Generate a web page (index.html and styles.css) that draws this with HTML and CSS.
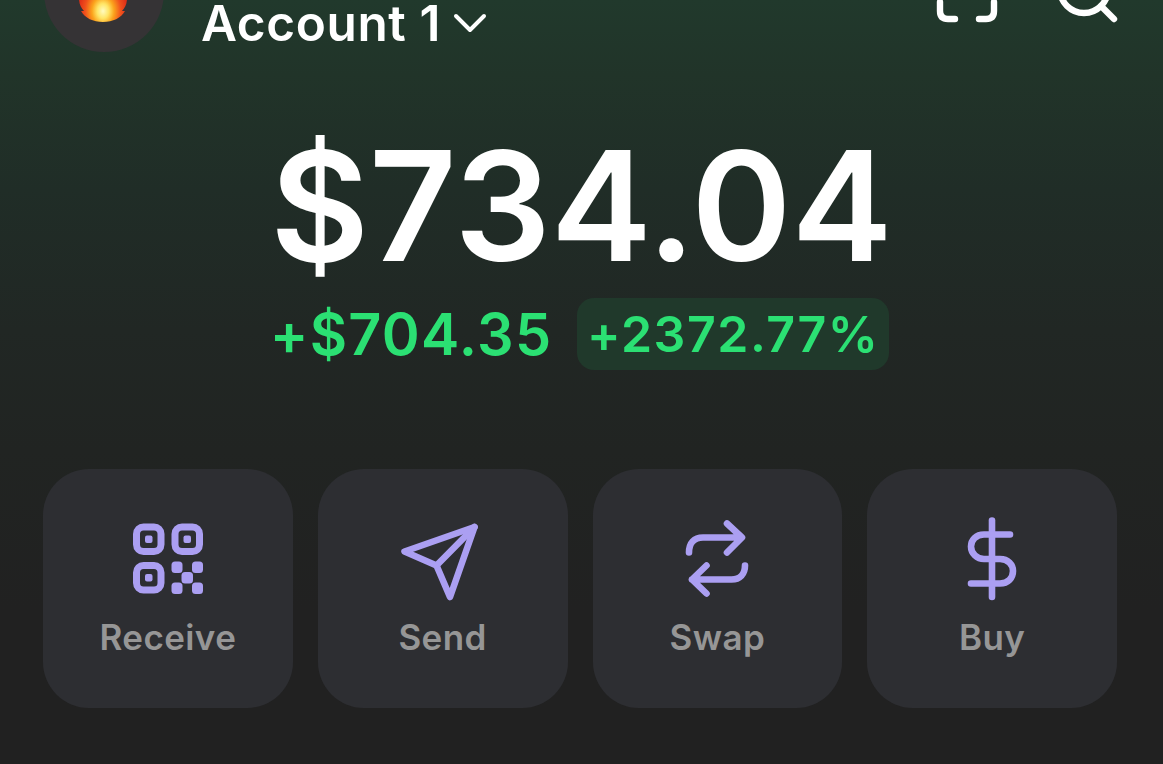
FILE: index.html
```
<!DOCTYPE html>
<html lang="en">
<head>
    <meta charset="UTF-8">
    <meta name="viewport" content="width=device-width, initial-scale=1.0">
    <title>Wallet - Account 1</title>
    <link rel="stylesheet" href="styles.css">
</head>
<body>
    <header class="header">
        <div class="avatar">
            <svg class="flame" viewBox="0 0 54 62">
                <defs>
                    <radialGradient id="fire" cx="50%" cy="82%" r="50%">
                        <stop offset="0" stop-color="#fffbc0"/>
                        <stop offset="0.24" stop-color="#ffe566"/>
                        <stop offset="0.46" stop-color="#fba31c"/>
                        <stop offset="0.75" stop-color="#f0501c"/>
                        <stop offset="1" stop-color="#df3017"/>
                    </radialGradient>
                </defs>
                <path fill="url(#fire)" d="M27 0C29 14 51 20 51 37C51 43 49 47 46 50L49 50C45 57 37 61 27 61C17 61 9 57 5 50L8 50C5 47 3 43 3 37C3 24 24 16 27 0Z"/>
            </svg>
        </div>
        <div class="account">
            <span class="account-name">Account 1</span>
            <svg class="chevron" viewBox="0 0 34 22"><path d="M3 4L17 18L31 4"/></svg>
        </div>
        <div class="tools">
            <svg class="tool" viewBox="0 0 64 64">
                <path d="M5 22V13Q5 5 13 5H22M42 5H51Q59 5 59 13V22M5 42V51Q5 59 13 59H20M44 59H51Q59 59 59 51V42"/>
            </svg>
            <svg class="tool" viewBox="0 0 64 64">
                <circle cx="29" cy="29" r="24"/>
                <path d="M46 46L59 59"/>
            </svg>
        </div>
    </header>

    <main>
        <section class="balance">
            <h1>$734.04</h1>
            <div class="change">
                <span class="amount">+$704.35</span>
                <span class="percent">+2372.77%</span>
            </div>
        </section>

        <nav class="actions">
            <button class="action">
                <svg class="icon icon-qr" viewBox="0 0 84 84">
                    <g class="frames">
                        <rect x="10.5" y="10" width="24.5" height="24.5" rx="7"/>
                        <rect x="49" y="10" width="24.5" height="24.5" rx="7"/>
                        <rect x="10.5" y="48.5" width="24.5" height="24.5" rx="7"/>
                    </g>
                    <g class="dots">
                        <rect x="19" y="18.5" width="7.5" height="7.5" rx="2"/>
                        <rect x="57.5" y="18.5" width="7.5" height="7.5" rx="2"/>
                        <rect x="19" y="57" width="7.5" height="7.5" rx="2"/>
                        <rect x="45.5" y="44.5" width="11" height="11.5" rx="3.5"/>
                        <rect x="66" y="44.5" width="11" height="11.5" rx="3.5"/>
                        <rect x="55.5" y="55" width="11.5" height="11.5" rx="3.5"/>
                        <rect x="45.5" y="65.5" width="11" height="11.5" rx="3.5"/>
                        <rect x="66" y="65.5" width="11" height="11.5" rx="3.5"/>
                    </g>
                </svg>
                <span>Receive</span>
            </button>
            <button class="action">
                <svg class="icon icon-send" viewBox="0 0 84 84">
                    <path d="M73.5 10L3.5 34.5L35.5 48.5L49 80Z"/>
                    <path d="M35.5 48.5L73.5 10"/>
                </svg>
                <span>Send</span>
            </button>
            <button class="action">
                <svg class="icon icon-swap" viewBox="0 0 84 84">
                    <path d="M14 35.5C14 26 19 20.5 28 20.5H66M52 6.5L67 20.5L52 35.5"/>
                    <path d="M70 48.5C70 57 65 62.5 56.5 62.5H17M31.5 48.5L17 62.5L31.5 76.5"/>
                </svg>
                <span>Swap</span>
            </button>
            <button class="action">
                <svg class="icon icon-buy" viewBox="0 0 84 84">
                    <path d="M42 3.5V80"/>
                    <path d="M60 17.5H34C26 17.5 21 23 21 29.5C21 36.5 27 42 34 42H50C58 42 63 47.5 63 54C63 61 58 66.5 50 66.5H21"/>
                </svg>
                <span>Buy</span>
            </button>
        </nav>
    </main>
</body>
</html>
```

FILE: styles.css
```
:root {
    --green: #2be073;
    --purple: #ab9ff2;
    --card: #2d2e32;
    --muted: #969696;
}

* {
    margin: 0;
    padding: 0;
    box-sizing: border-box;
}

body {
    font-family: Inter, sans-serif;
    background: linear-gradient(180deg, #21392c 0, #213429 75px, #202d27 190px, #212724 330px, #212422 450px, #212121 610px);
    color: #fff;
    height: 764px;
    overflow: hidden;
}

.header {
    display: flex;
    align-items: flex-end;
    height: 52px;
    padding: 0 44px;
}

.avatar {
    display: flex;
    justify-content: center;
    align-items: center;
    width: 120px;
    height: 120px;
    border-radius: 50%;
    background: #353335;
    flex: none;
}

.flame {
    width: 54px;
    height: 62px;
    margin-right: 2px;
}

.account {
    display: flex;
    align-items: center;
    gap: 12px;
    margin-left: 37px;
    padding-bottom: 7px;
}

.account-name {
    font-size: 49.5px;
    line-height: 44px;
    font-weight: 580;
    letter-spacing: 0.6px;
}

.chevron {
    width: 34px;
    height: 22px;
    fill: none;
    stroke: #fff;
    stroke-width: 4;
    stroke-linecap: round;
    stroke-linejoin: round;
}

.tools {
    display: flex;
    gap: 56px;
    margin-left: auto;
    padding-bottom: 28px;
}

.tool {
    width: 64px;
    height: 64px;
    fill: none;
    stroke: #fff;
    stroke-width: 6.4;
    stroke-linecap: round;
    stroke-linejoin: round;
}

.balance {
    display: flex;
    flex-direction: column;
    align-items: center;
    padding-top: 62px;
}

.balance h1 {
    font-size: 152px;
    line-height: 184px;
    font-weight: 570;
}

.change {
    display: flex;
    align-items: center;
    gap: 25px;
    height: 72px;
    margin-right: 4px;
}

.amount {
    font-size: 57.5px;
    font-weight: 560;
    letter-spacing: 1.3px;
    color: var(--green);
}

.percent {
    display: flex;
    justify-content: center;
    align-items: center;
    width: 312px;
    height: 72px;
    border-radius: 17px;
    background: #20392b;
    font-size: 50px;
    font-weight: 560;
    letter-spacing: 1.5px;
    color: var(--green);
}

.actions {
    display: grid;
    grid-template-columns: repeat(4, 1fr);
    gap: 25px;
    padding: 99px 46px 0 43px;
}

.action {
    display: flex;
    flex-direction: column;
    align-items: center;
    height: 239px;
    padding-top: 48px;
    border: none;
    border-radius: 46px;
    background: var(--card);
    color: var(--muted);
    font-family: inherit;
    font-size: 35px;
    line-height: 44px;
    font-weight: 590;
    letter-spacing: 0.4px;
}

.icon {
    width: 84px;
    height: 84px;
    margin-bottom: 14px;
    fill: none;
    stroke: var(--purple);
    stroke-width: 6.6;
    stroke-linecap: round;
    stroke-linejoin: round;
}

.icon-qr .frames {
    stroke-width: 7;
}

.icon-qr .dots {
    fill: var(--purple);
    stroke: none;
}
```
